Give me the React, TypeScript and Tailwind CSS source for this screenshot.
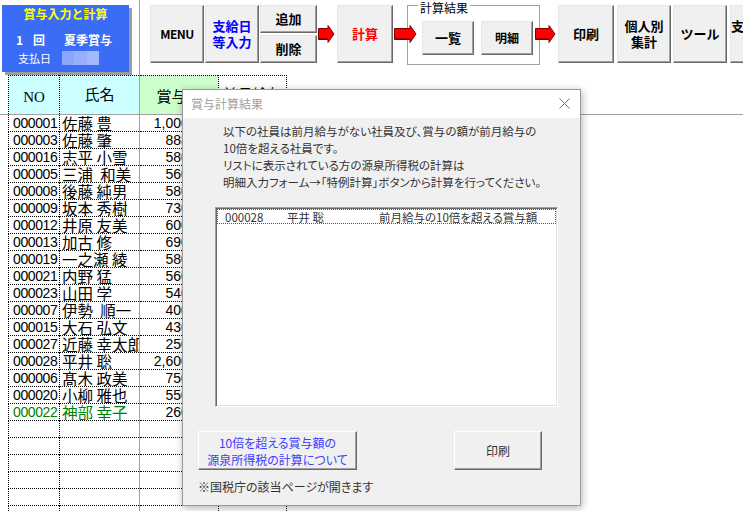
import React from 'react';

type Row = { no: string; name: string; amt: string; green?: boolean };

const rows: Row[] = [
  { no: '000001', name: '佐藤 豊', amt: '1,000,000' },
  { no: '000003', name: '佐藤 肇', amt: '888,000' },
  { no: '000016', name: '志平 小雪', amt: '580,000' },
  { no: '000005', name: '三浦\u2005 和美', amt: '560,000' },
  { no: '000008', name: '後藤 純男', amt: '580,000' },
  { no: '000009', name: '坂本 秀樹', amt: '730,000' },
  { no: '000012', name: '井原 友美', amt: '600,000' },
  { no: '000013', name: '加古 修', amt: '690,000' },
  { no: '000019', name: '一之瀬 綾', amt: '580,000' },
  { no: '000021', name: '内野 猛', amt: '560,000' },
  { no: '000023', name: '山田 学', amt: '540,000' },
  { no: '000007', name: '伊勢\u2005 順一', amt: '400,000' },
  { no: '000015', name: '大石 弘文', amt: '430,000' },
  { no: '000027', name: '近藤 幸太郎', amt: '250,000' },
  { no: '000028', name: '平井 聡', amt: '2,600,000' },
  { no: '000006', name: '髙木 政美', amt: '750,000' },
  { no: '000020', name: '小柳 雅也', amt: '550,000' },
  { no: '000022', name: '神部 幸子', amt: '260,000', green: true },
];

const emptyRows = 6;

function ToolButton({ children, className = '' }: { children: React.ReactNode; className?: string }) {
  return (
    <div
      className={`flex shrink-0 items-center justify-center border border-t-[#e6e6e6] border-l-[#e6e6e6] border-r-[#696969] border-b-[#696969] bg-[#f0f0f0] text-center text-[12px] font-bold leading-[16px] shadow-[inset_-1px_-1px_0_#a0a0a0] ${className}`}
    >
      {children}
    </div>
  );
}

function Arrow({ w, className = '' }: { w: number; className?: string }) {
  const head = 6;
  const end = w - 1;
  return (
    <svg width={w} height={58} className={`relative z-10 shrink-0 ${className}`}>
      <path
        d={`M1.5 23.5H${end - head}V20.5L${end} 29L${end - head} 37.5V34.5H1.5Z`}
        fill="#ff0000"
        stroke="#7a0000"
        strokeWidth="1"
      />
      <path d={`M2 33.5H${end - head}`} stroke="#b00000" strokeWidth="1" />
    </svg>
  );
}

function DataRow({ row }: { row?: Row }) {
  const color = row?.green ? 'text-[#008000]' : 'text-black';
  return (
    <div className="flex h-[17px] shrink-0">
      <div className="w-[8px] shrink-0" />
      <div
        className={`flex w-[51px] shrink-0 items-center overflow-hidden border-b border-l border-dotted border-black pl-[4px] font-['Liberation_Sans',sans-serif] text-[14px] leading-[16px] tracking-[-0.4px] ${color}`}
      >
        {row?.no}
      </div>
      <div
        className={`flex w-[80px] shrink-0 items-center overflow-hidden whitespace-pre border-b border-l border-dotted border-black pl-[2px] text-[15.5px] leading-[16px] ${color}`}
      >
        {row?.name}
      </div>
      <div className="w-px shrink-0 bg-[#a0a0a0]" />
      <div className="flex w-[78px] shrink-0 items-center justify-end overflow-hidden border-b border-dotted border-black pr-[2px] font-['Liberation_Sans',sans-serif] text-[14px] leading-[16px]">
        {row?.amt}
      </div>
      <div className="w-[69px] shrink-0 border-x border-b border-dotted border-black" />
    </div>
  );
}

export default function App() {
  return (
    <div className="relative h-[511px] w-[743px] overflow-hidden bg-white font-['Noto_Sans_CJK_JP',sans-serif] text-black">
      {/* toolbar area */}
      <div className="flex h-[75px]">
        <div className="w-[140px] shrink-0 border-r border-[#a0a0a0] pl-[2px] pt-[5px]">
          <div className="flex h-[67px] w-[127px] flex-col bg-[#3a6cf5] text-white shadow-[3px_3px_0_#9c9c9c]">
            <div className="pt-[1px] text-center text-[12px] font-bold leading-[16px] text-[#ffff00]">賞与入力と計算</div>
            <div className="mt-[11px] flex items-center text-[12px] font-bold leading-[14px]">
              <span className="ml-[14px]">1</span>
              <span className="ml-[10px]">回</span>
              <span className="ml-[19px]">夏季賞与</span>
            </div>
            <div className="mt-[4px] flex items-center">
              <span className="ml-[16px] text-[11px] leading-[14px]">支払日</span>
              <div className="ml-[11px] flex h-[14px] w-[37px]">
                <div className="w-[12px] bg-[#8aa6fa]" />
                <div className="w-[13px] bg-[#96b0fb]" />
                <div className="w-[12px] bg-[#a3b9fb]" />
              </div>
            </div>
          </div>
        </div>

        <div className="flex items-start pt-[5px]">
          <ToolButton className="ml-[10px] h-[58px] w-[54px] tracking-[-0.5px]">MENU</ToolButton>
          <ToolButton className="ml-[1px] h-[58px] w-[54px] text-[13px] text-[#0000ff]">
            支給日
            <br />
            等入力
          </ToolButton>
          <div className="ml-[1px] flex w-[57px] shrink-0 flex-col gap-[2px]">
            <ToolButton className="h-[28px] w-[57px] text-[13px]">追加</ToolButton>
            <ToolButton className="h-[28px] w-[57px] text-[13px]">削除</ToolButton>
          </div>
          <Arrow w={18} />
          <ToolButton className="ml-[2px] h-[58px] w-[56px] text-[13px] text-[#ff0000]">計算</ToolButton>
          <Arrow w={24} className="mr-[-10px]" />
          <div className="relative flex h-[60px] w-[133px] shrink-0 items-start border border-[#a0a0a0] pl-[14px] pt-[15px]">
            <span className="absolute left-[10px] top-[-6px] bg-white px-[2px] text-[12px] leading-[16px]">計算結果</span>
            <ToolButton className="h-[34px] w-[52px] text-[13px]">一覧</ToolButton>
            <ToolButton className="ml-[7px] h-[34px] w-[52px] text-[12px]">明細</ToolButton>
          </div>
          <Arrow w={22} className="ml-[-6px]" />
          <ToolButton className="ml-[2px] h-[58px] w-[56px] text-[13px]">印刷</ToolButton>
          <ToolButton className="ml-[3px] h-[58px] w-[54px] text-[13px]">
            個人別
            <br />
            集計
          </ToolButton>
          <ToolButton className="ml-[2px] h-[58px] w-[54px] text-[13px]">ツール</ToolButton>
          <ToolButton className="ml-[3px] h-[58px] w-[54px] text-[13px]">
            支払調書
            <br />
            作成
          </ToolButton>
        </div>
      </div>

      {/* header row */}
      <div className="flex h-[39px]">
        <div className="w-[8px] shrink-0" />
        <div className="flex w-[51px] shrink-0 items-center justify-center border-l border-t border-dotted border-black bg-[#ccffff] pt-[4px] font-['Liberation_Serif',serif] text-[15px]">
          NO
        </div>
        <div className="flex w-[80px] shrink-0 items-center justify-center border-l border-t border-dotted border-black bg-[#ccffff] pb-[2px] text-[15px]">
          氏名
        </div>
        <div className="w-px shrink-0 bg-[#a0a0a0]" />
        <div className="flex w-[78px] shrink-0 items-center justify-center border-t border-dotted border-black bg-[#ccffcc] pt-[3px] text-[15px]">
          賞与額
        </div>
        <div className="flex w-[69px] shrink-0 items-center justify-center overflow-hidden whitespace-nowrap border-x border-t border-dotted border-black pb-[2px] text-[15px]">
          前月給与
        </div>
      </div>
      <div className="h-px w-full bg-[#a0a0a0]" />

      {/* data rows */}
      <div className="flex flex-col">
        {rows.map((r) => (
          <DataRow key={r.no} row={r} />
        ))}
        {Array.from({ length: emptyRows }).map((_, i) => (
          <DataRow key={`e${i}`} />
        ))}
      </div>

      {/* dialog */}
      <div className="absolute left-[182px] top-[89px] flex h-[417px] w-[399px] flex-col border border-[#9a9a9a] bg-[#f0f0f0] text-[#333] shadow-[1px_2px_8px_rgba(0,0,0,0.3)]">
        <div className="flex h-[28px] shrink-0 items-center justify-between bg-white pl-[8px] pr-[10px]">
          <span className="text-[12px] text-[#a0a0a0]">賞与計算結果</span>
          <svg width="11" height="11" className="mt-[-2px]">
            <path d="M0.5 0.5L10.5 10.5M10.5 0.5L0.5 10.5" stroke="#707070" strokeWidth="1" />
          </svg>
        </div>

        <div className="ml-[40px] pt-[5px] text-[11.5px] leading-[17px] [font-feature-settings:'palt']">
          <p>以下の社員は前月給与がない社員及び、賞与の額が前月給与の</p>
          <p>10倍を超える社員です。</p>
          <p>リストに表示されている方の源泉所得税の計算は</p>
          <p>明細入力フォーム→「特例計算」ボタンから計算を行ってください。</p>
        </div>

        <div className="ml-[32px] mt-[16px] h-[200px] w-[343px] shrink-0 border border-t-[#a0a0a0] border-l-[#a0a0a0] border-r-white border-b-white bg-white shadow-[inset_1px_1px_0_#696969,inset_-1px_-1px_0_#e3e3e3]">
          <div className="ml-[1px] mr-[1px] mt-[1px] flex h-[15px] items-center border border-dotted border-[#555] pl-[7px] text-[11.5px] leading-[14px] [font-feature-settings:'palt']">
            <span className="w-[62px] shrink-0">000028</span>
            <span className="w-[92px] shrink-0">平井 聡</span>
            <span>前月給与の10倍を超える賞与額</span>
          </div>
        </div>

        <div className="mt-[24px] flex">
          <button className="ml-[15px] flex h-[39px] w-[159px] flex-col items-center justify-center border border-t-white border-l-white border-r-[#696969] border-b-[#696969] bg-[#f0f0f0] text-[12px] leading-[17px] text-[#3c3cff] shadow-[inset_-1px_-1px_0_#a0a0a0] [font-feature-settings:'palt']">
            <span>10倍を超える賞与額の</span>
            <span>源泉所得税の計算について</span>
          </button>
          <button className="ml-[97px] flex h-[39px] w-[88px] items-center justify-center border border-t-white border-l-white border-r-[#696969] border-b-[#696969] bg-[#f0f0f0] text-[12px] text-[#333] shadow-[inset_-1px_-1px_0_#a0a0a0]">
            印刷
          </button>
        </div>

        <p className="ml-[15px] mt-[8px] text-[12px] leading-[17px] [font-feature-settings:'palt']">※国税庁の該当ページが開きます</p>
      </div>
    </div>
  );
}
